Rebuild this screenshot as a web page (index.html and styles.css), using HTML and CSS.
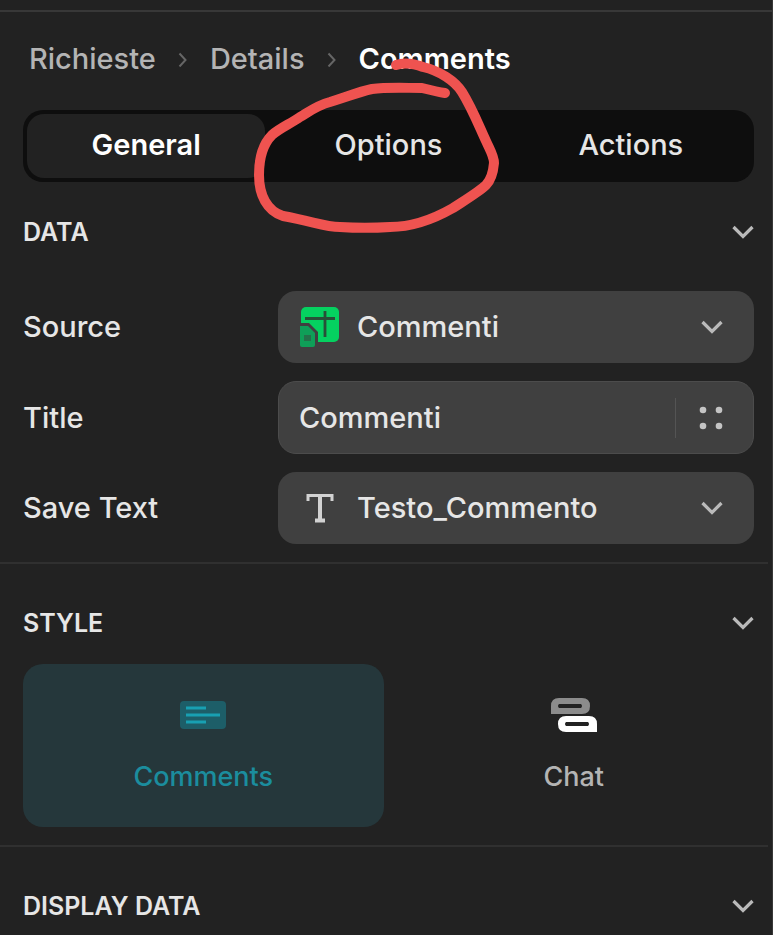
FILE: index.html
```html
<!DOCTYPE html>
<html lang="it">
<head>
    <meta charset="UTF-8">
    <meta name="viewport" content="width=device-width, initial-scale=1.0">
    <title>Comments</title>
    <link rel="stylesheet" href="styles.css">
</head>
<body>

<svg class="sprite" aria-hidden="true">
    <symbol id="chevron-down" viewBox="0 0 22 16">
        <path d="M1.5 3 L11 12.5 L20.5 3" fill="none" stroke="currentColor" stroke-width="3.2"/>
    </symbol>
    <symbol id="chevron-right" viewBox="0 0 10 16">
        <path d="M1.5 2.5 L7.5 9 L1.5 15.5" fill="none" stroke="currentColor" stroke-width="2"/>
    </symbol>
</svg>

<main class="panel">
    <nav class="breadcrumb" aria-label="Breadcrumb">
        <a href="#">Richieste</a>
        <svg class="separator"><use href="#chevron-right"/></svg>
        <a href="#">Details</a>
        <svg class="separator"><use href="#chevron-right"/></svg>
        <a href="#" class="current" aria-current="page">Comments</a>
    </nav>

    <div class="tabs" role="tablist">
        <button class="tab active" role="tab" aria-selected="true">General</button>
        <button class="tab" role="tab" aria-selected="false">Options</button>
        <button class="tab" role="tab" aria-selected="false">Actions</button>
    </div>

    <section class="section data">
        <button class="section-header">DATA <svg class="chevron"><use href="#chevron-down"/></svg></button>
        <div class="fields">
            <div class="field">
                <label for="source">Source</label>
                <div class="control">
                    <svg class="field-icon" viewBox="0 0 42 42">
                        <rect x="2" y="1" width="38" height="35" rx="5" fill="#05d160"/>
                        <path d="M6 12.5 H36 M26 5 V31" fill="none" stroke="#285038" stroke-width="2.8"/>
                        <path d="M0 17 H10 L19 26 V42 H0 Z" fill="#404040"/>
                        <path d="M1 20 H9 L16 27 V39 Q16 41 14 41 H3 Q1 41 1 39 Z" fill="#0f9f58"/>
                        <rect x="5" y="29" width="7" height="6" fill="#24704a"/>
                    </svg>
                    <select id="source">
                        <option>Commenti</option>
                    </select>
                    <svg class="chevron"><use href="#chevron-down"/></svg>
                </div>
            </div>
            <div class="field">
                <label for="title">Title</label>
                <div class="control outlined">
                    <input id="title" type="text" value="Commenti">
                    <button class="bind" aria-label="Bind column">
                        <svg class="dots" viewBox="0 0 24 24">
                            <circle cx="4" cy="4" r="3.3"/>
                            <circle cx="20" cy="4" r="3.3"/>
                            <circle cx="4" cy="20" r="3.3"/>
                            <circle cx="20" cy="20" r="3.3"/>
                        </svg>
                    </button>
                </div>
            </div>
            <div class="field">
                <label for="save-text">Save Text</label>
                <div class="control">
                    <svg class="field-icon" viewBox="0 0 42 42">
                        <path d="M9 14 V8.500 H33 V14" fill="none" stroke="#d2d2d2" stroke-width="3"/>
                        <path d="M21 8 V33 M16 33.500 H26" fill="none" stroke="#d2d2d2" stroke-width="4"/>
                    </svg>
                    <select id="save-text">
                        <option>Testo_Commento</option>
                    </select>
                    <svg class="chevron"><use href="#chevron-down"/></svg>
                </div>
            </div>
        </div>
    </section>

    <section class="section">
        <button class="section-header">STYLE <svg class="chevron"><use href="#chevron-down"/></svg></button>
        <div class="cards">
            <button class="card selected" aria-pressed="true">
                <svg class="card-icon" viewBox="0 0 46 36">
                    <rect x="0" y="4" width="46" height="28" rx="4" fill="#1d5e68"/>
                    <path d="M6 11 H26 M6 18 H40 M6 25 H26" stroke="#18a0b2" stroke-width="3"/>
                </svg>
                Comments
            </button>
            <button class="card" aria-pressed="false">
                <svg class="card-icon" viewBox="0 0 46 36">
                    <path fill="#8c8c8c" fill-rule="evenodd" d="M0 17 V9 Q0 1 8 1 H31 Q39 1 39 9 Q39 17 31 17 Z M8 7 Q6 9 8 11 H30 Q32 9 30 7 Z"/>
                    <path fill="#ffffff" fill-rule="evenodd" d="M46 35 V27 Q46 19 38 19 H15 Q7 19 7 27 Q7 35 15 35 Z M15 25 Q13 27 15 29 H37 Q39 27 37 25 Z"/>
                </svg>
                Chat
            </button>
        </div>
    </section>

    <section class="section">
        <button class="section-header">DISPLAY DATA <svg class="chevron"><use href="#chevron-down"/></svg></button>
    </section>

    <!-- hand-drawn circle around the Options tab -->
    <svg class="marker" viewBox="0 0 260 190" aria-hidden="true">
        <path d="M146 15 C155 12 165 14 173 17 C190 21 205 31 212 42 C222 58 229 76 236 91 C240 100 244 106 244 113 C243 124 241 130 236 135 C230 141 220 147 203 158 C182 170 161 177 140 177 C125 178 105 178 90 177 C75 177 65 172 33 166 C17 161 9 145 9 125 C9 106 14 93 22 85 C30 78 40 74 50 67 C60 61 68 55 80 52 C94 48 108 42 122 39 C137 37 155 38 172 38 C180 40 188 42 195 43"/>
    </svg>
</main>

</body>
</html>
```

FILE: styles.css
```css
* {
    box-sizing: border-box;
}

body {
    margin: 0;
    background-color: #222222;
    color: #e6e6e6;
    font-family: 'Inter', sans-serif;
    font-size: 29px;
    font-weight: 500;
    line-height: 36px;
}

button,
input,
select {
    margin: 0;
    padding: 0;
    border: none;
    background: none;
    color: inherit;
    font: inherit;
}

button {
    cursor: pointer;
}

a {
    color: inherit;
    text-decoration: none;
}

.sprite {
    display: none;
}

.panel {
    position: relative;
    height: 100vh;
    overflow: hidden;
    padding-top: 10px;
    border-right: 1px solid #383838;
}

/* Breadcrumb */
.breadcrumb {
    display: flex;
    align-items: center;
    gap: 22px;
    height: 100px;
    padding: 0 29px 4px;
    border-top: 2px solid #383838;
    color: #b4b4b4;
}

.breadcrumb .current {
    color: #ffffff;
    font-weight: 600;
}

.separator {
    width: 10px;
    height: 16px;
    color: #666666;
}

/* Tabs */
.tabs {
    display: grid;
    grid-template-columns: repeat(3, 1fr);
    gap: 4px;
    height: 72px;
    margin: 0 18px 0 23px;
    padding: 4px;
    border-radius: 20px;
    background-color: #0e0e0e;
}

.tab {
    padding-bottom: 2px;
    border-radius: 17px;
}

.tab.active {
    background-color: #222222;
    color: #ffffff;
    font-weight: 600;
}

/* Sections */
.section {
    margin-right: 4px;
    padding: 18px 14px 18px 23px;
    border-top: 2px solid #303030;
}

.section.data {
    padding-top: 9px;
    border-top: none;
}

.section-header {
    display: flex;
    align-items: center;
    justify-content: space-between;
    width: 100%;
    height: 82px;
    font-size: 25px;
    font-weight: 600;
}

.chevron {
    flex: none;
    width: 22px;
    height: 16px;
    color: #bababa;
}

/* Fields */
.fields {
    display: grid;
    gap: 18px;
    padding-top: 18px;
}

.field {
    display: grid;
    grid-template-columns: 255px minmax(0, 1fr);
    align-items: center;
}

.control {
    display: flex;
    align-items: center;
    height: 72px;
    padding: 0 31px 0 21px;
    border-radius: 18px;
    background-color: #404040;
}

.control.outlined {
    height: 73px;
    padding: 0 0 0 20px;
    border: 1px solid #4c4c4c;
}

.control select,
.control input {
    flex: 1;
    min-width: 0;
    height: 100%;
    appearance: none;
    outline: none;
}

.field-icon {
    flex: none;
    width: 42px;
    height: 42px;
    margin-right: 16px;
}

.bind {
    display: flex;
    align-items: center;
    justify-content: center;
    width: 78px;
    height: 40px;
    padding-right: 8px;
    border-left: 1px solid #545454;
}

.dots {
    width: 24px;
    height: 24px;
    fill: #c4c4c4;
}

/* Style cards */
.cards {
    display: grid;
    grid-template-columns: 1fr 1fr;
    gap: 10px;
}

.card {
    display: flex;
    flex-direction: column;
    align-items: center;
    gap: 26px;
    height: 163px;
    padding-top: 33px;
    border-radius: 20px;
    color: #b4b4b4;
    font-size: 27px;
}

.card.selected {
    background-color: #25373b;
    color: #1b8d9e;
}

.card-icon {
    width: 46px;
    height: 36px;
}

.marker {
    position: absolute;
    top: 50px;
    left: 250px;
    width: 260px;
    height: 190px;
    pointer-events: none;
    fill: none;
    stroke: #ef5350;
    stroke-width: 10;
    stroke-linecap: round;
    stroke-linejoin: round;
}
```
